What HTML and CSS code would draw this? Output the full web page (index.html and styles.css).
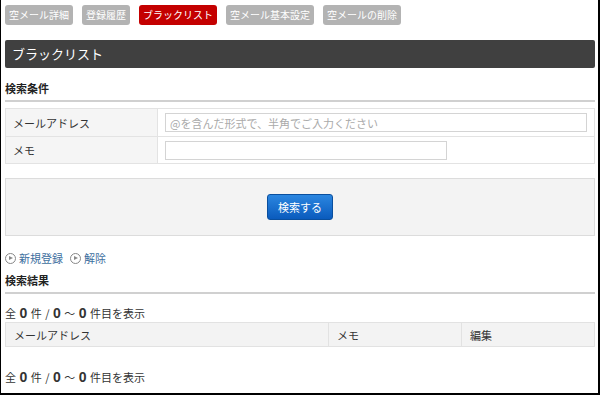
FILE: index.html
```html
<!DOCTYPE html>
<html lang="ja">
<head>
<meta charset="UTF-8">
<title>ブラックリスト</title>
<link rel="stylesheet" href="styles.css">
</head>
<body>
<div id="frame">
    <ul class="tabs">
        <li><a href="#">空メール詳細</a></li>
        <li><a href="#">登録履歴</a></li>
        <li class="active"><a href="#">ブラックリスト</a></li>
        <li><a href="#">空メール基本設定</a></li>
        <li><a href="#">空メールの削除</a></li>
    </ul>

    <h1 class="page-title">ブラックリスト</h1>

    <h2 class="section-title">検索条件</h2>
    <table class="form-table">
        <tr>
            <th>メールアドレス</th>
            <td><input type="text" class="wide" placeholder="@を含んだ形式で、半角でご入力ください"></td>
        </tr>
        <tr class="second">
            <th>メモ</th>
            <td><input type="text" class="mid"></td>
        </tr>
    </table>

    <div class="search-box">
        <button class="btn-search">検索する</button>
    </div>

    <div class="links">
        <a href="#"><span class="ico"></span>新規登録</a>
        <a href="#"><span class="ico"></span>解除</a>
    </div>

    <h2 class="section-title result">検索結果</h2>
    <p class="count">全 <b>0</b> 件 / <b>0</b> ～ <b>0</b> 件目を表示</p>
    <table class="list-table">
        <tr>
            <th class="c-mail">メールアドレス</th>
            <th class="c-memo">メモ</th>
            <th class="c-edit">編集</th>
        </tr>
    </table>
    <p class="count bottom">全 <b>0</b> 件 / <b>0</b> ～ <b>0</b> 件目を表示</p>
</div>
</body>
</html>
```

FILE: styles.css
```css
html, body {
  margin: 0;
  height: 100%;
}

body {
  font-family: "Noto Sans CJK JP", "Noto Sans", sans-serif;
  font-size: 11px;
  color: #333;
  background: #fff;
}

#frame {
  box-sizing: border-box;
  height: 395px;
  padding: 5px 3px 0 4px;
  border-left: 1px solid #000;
  border-right: 2px solid #000;
  border-bottom: 2px solid #000;
  overflow: hidden;
}

/* tabs */
.tabs {
  list-style: none;
  margin: 0;
  padding: 0;
  display: flex;
  gap: 9px;
}

.tabs a {
  display: block;
  height: 20px;
  line-height: 20px;
  padding: 0 4px;
  background-color: #b3b3b3;
  color: #fff;
  text-decoration: none;
  border-radius: 3px;
  font-size: 10px;
}

.tabs .active a {
  background-color: #c40000;
}

.page-title {
  margin: 15px 0 0;
  height: 28px;
  line-height: 27px;
  padding: 0 7px;
  background-color: #404040;
  color: #fff;
  font-size: 13px;
  font-weight: normal;
  border-radius: 2px;
}

.section-title {
  margin: 13px 0 0;
  padding-bottom: 4px;
  border-bottom: 2px solid #d0d0d0;
  font-size: 11px;
  font-weight: bold;
  color: #222;
  line-height: 15px;
}

/* search form */
.form-table {
  width: 100%;
  margin-top: 6px;
  border-collapse: collapse;
}

.form-table th,
.form-table td {
  border: 1px solid #e3e3e3;
  height: 27px;
  padding: 0 7px;
}

.form-table .second th,
.form-table .second td {
  height: 26px;
}

.form-table th {
  width: 137px;
  background-color: #f5f5f5;
  text-align: left;
  font-weight: normal;
  font-size: 11px;
}

.form-table input {
  box-sizing: border-box;
  height: 19px;
  border: 1px solid #d4d4d4;
  font-family: inherit;
  font-size: 11px;
  padding: 0 4px;
  vertical-align: middle;
}

.form-table input::placeholder {
  color: #aaa;
}

.form-table .wide {
  width: 100%;
}

.form-table .mid {
  width: 282px;
}

.search-box {
  margin-top: 14px;
  height: 56px;
  background-color: #f3f3f3;
  border: 1px solid #dcdcdc;
  display: flex;
  align-items: center;
  justify-content: center;
}

.btn-search {
  width: 66px;
  height: 26px;
  border: 1px solid #0a4f9e;
  border-radius: 3px;
  background: linear-gradient(#2b86e0, #0a5bbd);
  color: #fff;
  font-family: inherit;
  font-size: 11px;
  cursor: pointer;
}

/* links */
.links {
  margin-top: 15px;
  display: flex;
  gap: 7px;
  font-size: 11px;
  line-height: 15px;
}

.links a {
  color: #3c6e9e;
  text-decoration: none;
  display: flex;
  align-items: center;
}

.ico {
  position: relative;
  display: inline-block;
  box-sizing: border-box;
  width: 11px;
  height: 11px;
  border: 1px solid #888;
  border-radius: 50%;
  margin-right: 3px;
}

.ico::after {
  content: "";
  position: absolute;
  left: 3px;
  top: 2px;
  border-left: 4px solid #888;
  border-top: 2.5px solid transparent;
  border-bottom: 2.5px solid transparent;
}

.section-title.result {
  margin-top: 7px;
}

.count {
  margin: 11px 0 0;
  font-size: 11px;
  line-height: 17px;
  word-spacing: 1px;
}

.count b {
  font-size: 14px;
  font-family: "Liberation Sans", Arial, sans-serif;
}

.count.bottom {
  margin-top: 22px;
}

/* result list */
.list-table {
  width: 100%;
  border-collapse: collapse;
}

.list-table th {
  height: 23px;
  padding: 0 8px;
  background-color: #f3f3f3;
  border: 1px solid #e2e2e2;
  text-align: left;
  font-weight: normal;
  font-size: 11px;
}

.list-table .c-mail {
  width: 306px;
}

.list-table .c-memo {
  width: 116px;
}
```
